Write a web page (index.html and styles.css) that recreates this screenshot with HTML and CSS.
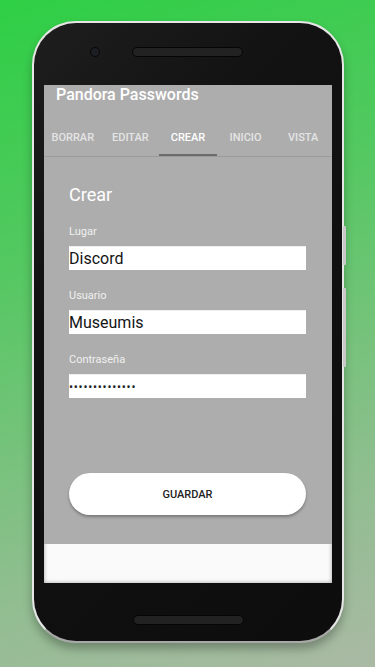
FILE: index.html
```html
<!DOCTYPE html>
<html lang="es">
<head>
<meta charset="utf-8">
<title>Pandora Passwords</title>
<link rel="stylesheet" href="styles.css">
</head>
<body>
<div class="phone">
  <span class="side-btn side-btn-1"></span>
  <span class="side-btn side-btn-2"></span>
  <div class="phone-top">
    <span class="camera"></span>
    <span class="speaker"></span>
  </div>
  <div class="screen">
    <header class="appbar">
      <div class="app-title">Pandora Passwords</div>
      <nav class="tabs">
        <div class="tab">BORRAR</div>
        <div class="tab">EDITAR</div>
        <div class="tab tab-active">CREAR</div>
        <div class="tab">INICIO</div>
        <div class="tab">VISTA</div>
      </nav>
    </header>
    <main class="content">
      <h1 class="heading">Crear</h1>
      <div class="field">
        <label class="label">Lugar</label>
        <input class="input" type="text" value="Discord" readonly>
      </div>
      <div class="field">
        <label class="label">Usuario</label>
        <input class="input" type="text" value="Museumis" readonly>
      </div>
      <div class="field">
        <label class="label">Contraseña</label>
        <input class="input input-pass" type="password" value="museumis123456" readonly>
      </div>
      <button class="save-btn" type="button">GUARDAR</button>
    </main>
    <div class="bottom-area"></div>
  </div>
  <div class="phone-bottom">
    <span class="speaker"></span>
  </div>
</div>
</body>
</html>
```

FILE: styles.css
```css
* { box-sizing: border-box; }
html, body { margin: 0; padding: 0; }
body {
  width: 375px;
  height: 667px;
  overflow: hidden;
  font-family: Roboto, "Noto Sans", sans-serif;
  background: linear-gradient(162deg, #2ecf45 0%, #55c862 35%, #8fbe8f 75%, #aab9a4 100%);
  padding: 21px 0 0 32px;
}
.phone {
  position: relative;
  width: 312px;
  height: 622px;
  border: 2px solid #e6e6e6;
  border-bottom-color: #a8a8a8;
  border-radius: 44px;
  background: linear-gradient(135deg, #1e1e1e 0%, #121212 30%, #0d0d0d 100%);
  box-shadow: 0 6px 10px rgba(0, 0, 0, 0.28);
  padding: 0 10px;
  display: flex;
  flex-direction: column;
}
.side-btn {
  position: absolute;
  right: -4px;
  width: 3px;
  background: #c9c9c9;
  border-radius: 1px;
}
.side-btn-1 { top: 203px; height: 39px; }
.side-btn-2 { top: 265px; height: 79px; }
.phone-top {
  height: 62px;
  display: flex;
  align-items: center;
  padding-left: 46px;
  padding-bottom: 5px;
  gap: 32px;
}
.camera {
  width: 10px;
  height: 10px;
  border-radius: 50%;
  background: #1d1d24;
  border: 1.5px solid #070707;
}
.speaker {
  width: 111px;
  height: 10px;
  border-radius: 5px;
  background: #222;
  border: 1.5px solid #050505;
}
.screen {
  width: 288px;
  height: 498px;
  background: #fafafa;
  box-shadow: inset 0 0 4px rgba(0, 0, 0, 0.35);
  display: flex;
  flex-direction: column;
}
.appbar {
  background: #adadad;
  border-bottom: 1px solid #9b9b9b;
}
.app-title {
  height: 32px;
  padding-left: 12px;
  font-size: 16px;
  line-height: 20px;
  font-weight: 500;
  color: #ffffff;
}
.tabs {
  display: flex;
  height: 39px;
}
.tab {
  flex: 1 1 0;
  text-align: center;
  font-size: 11px;
  font-weight: 500;
  line-height: 33px;
  padding-top: 4px;
  color: #e4e4e4;
  border-bottom: 2px solid transparent;
}
.tab-active {
  color: #ffffff;
  border-bottom-color: #6b6b6b;
}
.content {
  height: 387px;
  background: #adadad;
  padding: 27px 26px 0 25px;
  display: flex;
  flex-direction: column;
}
.heading {
  margin: 0 0 19px;
  font-size: 18px;
  line-height: 22px;
  font-weight: 400;
  color: #ffffff;
}
.field {
  display: flex;
  flex-direction: column;
  margin-bottom: 19px;
}
.label {
  font-size: 11px;
  line-height: 13px;
  color: #f0f0f0;
  margin-bottom: 8px;
}
.input {
  width: 100%;
  height: 24px;
  border: 0;
  border-top: 1px solid #f0f0f0;
  outline: none;
  margin: 0;
  padding: 0;
  background: #ffffff;
  font-family: Roboto, "Noto Sans", sans-serif;
  font-size: 16px;
  color: #151515;
}
.input-pass {
  font-size: 12px;
  letter-spacing: 0.75px;
  color: #222;
}
.save-btn {
  margin-top: 56px;
  width: 100%;
  height: 42px;
  border: 0;
  border-radius: 21px;
  background: #ffffff;
  box-shadow: 0 2px 3px rgba(0, 0, 0, 0.3);
  font-family: Roboto, "Noto Sans", sans-serif;
  font-size: 11px;
  font-weight: 500;
  color: #222222;
  padding: 0;
}
.bottom-area {
  flex: 1 1 auto;
}
.phone-bottom {
  display: flex;
  justify-content: center;
  padding-top: 32px;
}
```
